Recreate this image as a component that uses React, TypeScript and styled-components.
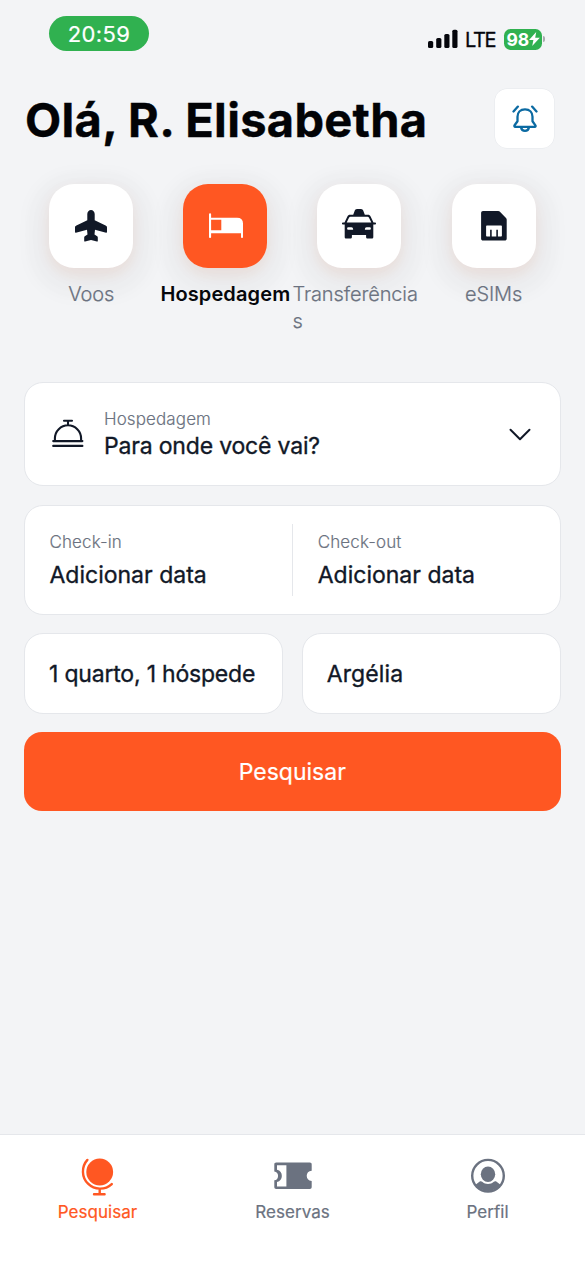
import React from "react";
import styled, { createGlobalStyle } from "styled-components";

const colors = {
  page: "#f3f4f6",
  line: "#e5e7eb",
  ink: "#111827",
  muted: "#6b7280",
  accent: "#ff5722",
  green: "#30b150",
  blue: "#0b6aa2",
};

const GlobalStyle = createGlobalStyle`
  * { box-sizing: border-box; }
  body { margin: 0; background: ${colors.page}; }
  button { font: inherit; border: 0; padding: 0; margin: 0; background: none; }
`;

const Screen = styled.div`
  width: 585px;
  height: 1266px;
  display: flex;
  flex-direction: column;
  overflow: hidden;
  background: ${colors.page};
  color: ${colors.ink};
  font-family: Inter, "Liberation Sans", sans-serif;
  font-size: 23px;
  white-space: nowrap;
  svg { display: block; flex: none; }
`;

const StatusBar = styled.header`
  height: 88px;
  padding: 16px 40px 0 49px;
  display: flex;
  justify-content: space-between;
  align-items: flex-start;
`;

const TimePill = styled.div`
  width: 100px;
  height: 34.5px;
  border-radius: 18px;
  background: ${colors.green};
  color: #fff;
  font-size: 22px;
  font-weight: 400;
  -webkit-text-stroke: 0.2px;
  letter-spacing: 0.4px;
  line-height: 36px;
  text-align: center;
`;

const StatusIcons = styled.div`
  display: flex;
  align-items: center;
  height: 22px;
  margin-top: 12px;
`;

const Network = styled.span`
  margin: 2px 0 0 7px;
  width: 39px;
  font-size: 20px;
  -webkit-text-stroke: 0.3px;
  letter-spacing: -1.4px;
  line-height: 24px;
  color: #05060c;
`;

const Battery = styled.div`
  width: 38px;
  height: 21px;
  border-radius: 6.5px;
  background: ${colors.green};
  color: #fff;
  display: flex;
  align-items: center;
  padding-left: 2.5px;
  font-size: 17.5px;
  font-weight: 700;
  letter-spacing: 0;
  line-height: 21px;
`;

const BatteryTip = styled.i`
  width: 2px;
  height: 6px;
  margin-left: 1px;
  border-radius: 0 2px 2px 0;
  background: #a9abae;
`;

const TitleRow = styled.div`
  height: 60px;
  padding: 1px 31px 0 25px;
  display: flex;
  justify-content: space-between;
`;

const Title = styled.h1`
  margin: 0;
  color: #020306;
  font-size: 47px;
  font-weight: 700;
  letter-spacing: 0.3px;
  line-height: 61px;
  -webkit-text-stroke: 0.4px;
`;

const BellButton = styled.button`
  width: 59px;
  height: 59px;
  border-radius: 12px;
  background: #fff;
  box-shadow: 0 0 0 0.5px ${colors.line};
  display: flex;
  align-items: center;
  justify-content: center;
`;

const Categories = styled.nav`
  display: grid;
  grid-template-columns: repeat(4, 134.1px);
  margin: 36px 0 0 24.2px;
  height: 198px;
`;

const Category = styled.div`
  display: flex;
  flex-direction: column;
  align-items: center;
`;

const Tile = styled.div<{ $active?: boolean }>`
  width: 84px;
  height: 84px;
  flex: none;
  display: flex;
  align-items: center;
  justify-content: center;
  border-radius: 25px;
  color: ${(p) => (p.$active ? "#fff" : colors.ink)};
  background: ${(p) => (p.$active ? colors.accent : "#fff")};
  box-shadow:
    0 6px 14px rgba(255, 87, 34, 0.08),
    0 9px 34px rgba(0, 0, 0, 0.05),
    0 9px 16px 22px rgba(60, 40, 20, 0.018);
`;

const CategoryLabel = styled.span<{ $active?: boolean }>`
  position: relative;
  margin-top: 13px;
  max-width: 134px;
  white-space: normal;
  overflow-wrap: anywhere;
  font-size: 20px;
  line-height: 27px;
  font-weight: ${(p) => (p.$active ? 600 : 300)};
  letter-spacing: ${(p) => (p.$active ? "0.12px" : "-0.12px")};
  -webkit-text-stroke: ${(p) => (p.$active ? "0" : "0.2px")};
  color: ${(p) => (p.$active ? "#05070b" : colors.muted)};
`;

const Form = styled.main`
  flex: 1;
  margin: 0 24.5px 0 24px;
  display: flex;
  flex-direction: column;
`;

const Card = styled.section`
  border: 1px solid ${colors.line};
  border-radius: 19px;
  background: #fff;
  display: flex;
  align-items: center;
`;

const Destination = styled(Card)`
  height: 104px;
  margin-bottom: 18.5px;
  padding: 0 29px 0 27px;
`;

const Dates = styled(Card)`
  height: 110px;
  margin-bottom: 18.5px;
  padding: 18px 0;
`;

const FieldText = styled.div<{ $gap: number }>`
  display: flex;
  flex-direction: column;
  gap: ${(p) => p.$gap}px;
`;

const Small = styled.span`
  font-size: 17px;
  line-height: 22px;
  font-weight: 300;
  letter-spacing: 0.1px;
  -webkit-text-stroke: 0.15px;
  color: ${colors.muted};
`;

const Value = styled.span<{ $track?: number }>`
  font-size: 23px;
  line-height: 30px;
  letter-spacing: ${(p) => p.$track ?? 0}px;
  -webkit-text-stroke: 0.35px;
  color: ${colors.ink};
`;

const DestinationText = styled(FieldText)`
  flex: 1;
  margin-left: 20px;
`;

const DateField = styled.div`
  width: 267.5px;
  height: 72px;
  padding: 1.5px 0 0 24.5px;
  display: flex;
  align-items: center;
  & + & { border-left: 1px solid ${colors.line}; }
`;

const Split = styled.div`
  display: grid;
  grid-template-columns: 1fr 1fr;
  gap: 19px;
  margin-bottom: 18px;
`;

const Option = styled(Card)`
  height: 81px;
  padding: 1px 0 0 24px;
`;

const SearchButton = styled.button`
  height: 78.5px;
  border-radius: 18px;
  background: ${colors.accent};
  color: #fff;
  font-size: 23px;
  line-height: 80px;
  -webkit-text-stroke: 0.2px;
`;

const TabBar = styled.footer`
  height: 132px;
  border-top: 1px solid ${colors.line};
  background: #fff;
  display: grid;
  grid-template-columns: repeat(3, 1fr);
`;

const Tab = styled.div<{ $active?: boolean }>`
  display: flex;
  flex-direction: column;
  align-items: center;
  padding-top: 20px;
  font-size: 17px;
  line-height: 22px;
  letter-spacing: 0.06px;
  -webkit-text-stroke: 0.2px;
  color: ${(p) => (p.$active ? colors.accent : colors.muted)};
  svg { margin-bottom: 4px; }
`;

const Signal = () => (
  <svg width="30" height="20" viewBox="0 0 30 20" fill="#05060c">
    <rect x="0" y="12" width="5.2" height="7" rx="1.6" />
    <rect x="8.2" y="9" width="5.2" height="10" rx="1.6" />
    <rect x="16.3" y="5" width="5.2" height="14" rx="1.6" />
    <rect x="24.3" y="0.7" width="5.2" height="18.3" rx="1.6" />
  </svg>
);

const Bolt = () => (
  <svg width="11" height="14" viewBox="0 0 11 14" fill="#fff">
    <path d="M7.2 0 0 8h4.4L3.2 14 10.8 5.7H6.2Z" />
  </svg>
);

const BellIcon = () => (
  <svg width="26" height="28" viewBox="0 0 26 28" fill="none" stroke={colors.blue} strokeWidth="2.3" strokeLinecap="round" strokeLinejoin="round">
    <path d="M13 4.300c-4.800 0-7.500 3.200-7.500 7.400v4.600L2.600 20.300c-.5.7-.2 1.500.6 1.500h19.600c.8 0 1.100-.8.6-1.500l-2.900-4V11.700c0-4.200-2.700-7.400-7.500-7.400Z" />
    <path d="M9 22.300c.4 2.300 1.900 3.600 4 3.600s3.600-1.300 4-3.600" />
    <path d="M5.900 1.600 L1.500 6.500 M20.100 1.600 L24.500 6.500" />
  </svg>
);

const PlaneIcon = () => (
  <svg width="32" height="32" viewBox="0 0 32 32" fill="currentColor">
    <path d="M16 0c2 0 3.700 1.700 3.700 4v6.200l10.900 5.300c.9.5 1.400 1 1.400 2v4.600c0 .5-.4.7-.9.600L20 19.800l-.5 4.800 2.700 1.700c.4.300.6.700.6 1.200v3.400c0 .5-.4.700-.8.600L16 29.900l-6 1.600c-.4.100-.8-.1-.8-.6v-3.400c0-.5.2-.9.6-1.200l2.700-1.700-.5-4.800L.9 22.700c-.5.100-.9-.1-.9-.6v-4.600c0-1 .5-1.500 1.400-2l10.900-5.300V4C12.300 1.700 14 0 16 0Z" />
  </svg>
);

const BedIcon = () => (
  <svg width="36" height="26" viewBox="-2 0 36 26" fill="currentColor">
    <path fillRule="evenodd" d="M0 1.200Q0 .3 1.050 .3T2.100 1.200V4.700H28Q34 4.700 34 10.500V24.300Q34 25 33 25T32 24.300V20.200H2.100V24.300Q2.100 25 1.050 25T0 24.300ZM2.100 6.800V17.200H12.300V6.800Z" />
  </svg>
);

const TaxiIcon = () => (
  <svg width="34" height="34" viewBox="0 0 34 34" fill="currentColor">
    <path fillRule="evenodd" d="M15 0h4c1.200 0 1.900.7 2.300 1.800l1.500 4H26c1.200 0 2.100.6 2.600 1.700l2.900 6h1.700c1.100 0 1.100 1.900 0 1.900h-1.900V28c0 1-.6 1.600-1.600 1.600h-4c-1 0-1.600-.6-1.600-1.600v-2H9.900v2c0 1-.6 1.600-1.600 1.600h-4c-1 0-1.600-.6-1.600-1.600V15.400H.8c-1.100 0-1.100-1.900 0-1.900h1.700l2.900-6C5.900 6.400 6.800 5.800 8 5.800h3.200l1.500-4C13.100.7 13.800 0 15 0ZM8.500 7.700c-.7 0-1.200.3-1.500 1l-2.300 4.900h24.600L27 8.700c-.3-.7-.8-1-1.500-1ZM6.200 18.200q-1.100 0-1.100 1.300t1.100 1.300h4.900v-.9q0-1.700-1.700-1.700ZM27.800 18.200q1.100 0 1.100 1.300t-1.100 1.300h-4.900v-.9q0-1.700 1.700-1.700Z" />
  </svg>
);

const SimIcon = () => (
  <svg width="26" height="30" viewBox="0 0 26 30">
    <path fill="currentColor" d="M2 0h15.200c.6 0 1.100.2 1.500.6l6.300 6.300c.4.400.7 1 .7 1.600v19.200c0 1.100-.8 1.900-1.900 1.900H2c-1.100 0-1.900-.8-1.900-1.900V1.900C.1.800.9 0 2 0Z" />
    <path fill="#fff" d="M5.900 14.500h14.200q.8 0 .8.800v9.400q0 .8-.8.800H16.900v-6.800h-1.600v6.800h-4.600v-6.800H9.100v6.800H5.900q-.8 0-.8-.8v-9.400q0-.8.8-.8Z" />
  </svg>
);

const ServiceBellIcon = () => (
  <svg width="32" height="30" viewBox="0 0 32 30" fill="none" stroke={colors.ink} strokeWidth="2.1" strokeLinecap="round">
    <path d="M12 1.700h8M16 1.700v4M2.900 21.700v-2.300a13.100 13.100 0 0 1 26.200 0v2.300M1.200 22.100h29.200M1.200 26.900h29.200" />
  </svg>
);

const ChevronIcon = () => (
  <svg width="22" height="14" viewBox="0 0 22 14" fill="none" stroke={colors.ink} strokeWidth="2" strokeLinecap="round" strokeLinejoin="round">
    <path d="m1.500 2.800 9.500 9.400 9.500-9.400" />
  </svg>
);

const GlobeIcon = () => (
  <svg width="38" height="42" viewBox="0 0 38 42" fill="none" stroke="currentColor" strokeWidth="2.4" strokeLinecap="round">
    <circle cx="20.7" cy="17" r="13.4" fill="currentColor" stroke="none" />
    <path d="M8.400 4.900a17.200 17.200 0 0 0 24.400 24.200M20.700 34.500V39M15 39.200h10.600" />
  </svg>
);

const TicketIcon = () => (
  <svg width="38" height="42" viewBox="0 0 38 42" fill="currentColor">
    <path fillRule="evenodd" d="M2.200 7.600h33.600c1.200 0 1.900.7 1.900 1.900v6.200c-6.600 0-6.600 10.200 0 10.200v6.200c0 1.200-.7 1.900-1.900 1.900H2.200c-1.200 0-1.900-.7-1.900-1.900v-6.900c5 0 5-8.800 0-8.800V9.500c0-1.200.7-1.900 1.900-1.900ZM3 10.300v4.400c6.500 1.300 6.500 11 0 12.300v4.400h9.400V10.300Z" />
  </svg>
);

const ProfileIcon = () => (
  <svg width="38" height="42" viewBox="0 0 38 42" fill="currentColor">
    <circle cx="19" cy="20.7" r="15.8" fill="none" stroke="currentColor" strokeWidth="2.4" />
    <ellipse cx="19" cy="19.3" rx="7.2" ry="7.7" />
    <path d="M10.700 26.600c.8-.6 1.800-.5 2.500.2 3.300 2.900 8.300 2.900 11.600 0 .7-.7 1.700-.8 2.500-.2l4.200 3.200A15.800 15.800 0 0 1 6.500 29.800Z" />
  </svg>
);

const categories = [
  { label: "Voos", icon: <PlaneIcon /> },
  { label: "Hospedagem", icon: <BedIcon />, active: true },
  { label: "Transferências", icon: <TaxiIcon /> },
  { label: "eSIMs", icon: <SimIcon /> },
];

const tabs = [
  { label: "Pesquisar", icon: <GlobeIcon />, active: true },
  { label: "Reservas", icon: <TicketIcon /> },
  { label: "Perfil", icon: <ProfileIcon /> },
];

export default function App() {
  return (
    <Screen>
      <GlobalStyle />
      <StatusBar>
        <TimePill>20:59</TimePill>
        <StatusIcons>
          <Signal />
          <Network>LTE</Network>
          <Battery>
            98
            <Bolt />
          </Battery>
          <BatteryTip />
        </StatusIcons>
      </StatusBar>
      <TitleRow>
        <Title>Olá, R. Elisabetha</Title>
        <BellButton aria-label="Notificações">
          <BellIcon />
        </BellButton>
      </TitleRow>
      <Categories>
        {categories.map((c) => (
          <Category key={c.label}>
            <Tile $active={c.active}>{c.icon}</Tile>
            <CategoryLabel $active={c.active}>{c.label}</CategoryLabel>
          </Category>
        ))}
      </Categories>
      <Form>
        <Destination>
          <ServiceBellIcon />
          <DestinationText $gap={1}>
            <Small>Hospedagem</Small>
            <Value $track={-0.18}>Para onde você vai?</Value>
          </DestinationText>
          <ChevronIcon />
        </Destination>
        <Dates>
          <DateField>
            <FieldText $gap={7}>
              <Small>Check-in</Small>
              <Value>Adicionar data</Value>
            </FieldText>
          </DateField>
          <DateField>
            <FieldText $gap={7}>
              <Small>Check-out</Small>
              <Value>Adicionar data</Value>
            </FieldText>
          </DateField>
        </Dates>
        <Split>
          <Option>
            <Value $track={-0.2}>1 quarto, 1 hóspede</Value>
          </Option>
          <Option>
            <Value $track={0.1}>Argélia</Value>
          </Option>
        </Split>
        <SearchButton>Pesquisar</SearchButton>
      </Form>
      <TabBar>
        {tabs.map((t) => (
          <Tab key={t.label} $active={t.active}>
            {t.icon}
            {t.label}
          </Tab>
        ))}
      </TabBar>
    </Screen>
  );
}
